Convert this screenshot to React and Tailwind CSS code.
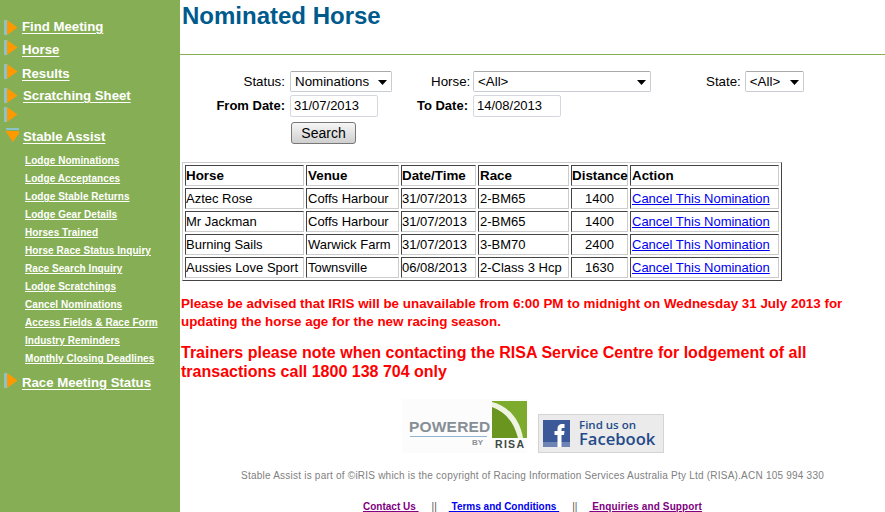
import React from "react";

const Arrow = ({ down }) =>
  down ? (
    <svg width="16" height="16" viewBox="0 0 16 16" className="shrink-0">
      <rect x="3" y="0" width="15" height="2" fill="#8cc3c9" />
      <polygon points="3,3 18,3 10.5,14" fill="#ff9900" transform="translate(-0.5 0)" />
    </svg>
  ) : (
    <svg width="14" height="16" viewBox="0 0 14 16" className="shrink-0">
      <rect x="0" y="0" width="3" height="15" fill="#8cc3c9" />
      <polygon points="3,0 13.5,7.5 3,15" fill="#ff9900" />
    </svg>
  );

const Main = ({ label, cls = "", gap = "ml-[4px]", drop = "-mt-[1px]" }) => (
  <div className={`flex items-start pl-[4px] ${cls}`}>
    <Arrow />
    {label && (
      <a className={`${gap} ${drop} text-[13.2px] leading-[16px] font-bold text-white underline underline-offset-2`}>{label}</a>
    )}
  </div>
);

const subs = [
  "Lodge Nominations",
  "Lodge Acceptances",
  "Lodge Stable Returns",
  "Lodge Gear Details",
  "Horses Trained",
  "Horse Race Status Inquiry",
  "Race Search Inquiry",
  "Lodge Scratchings",
  "Cancel Nominations",
  "Access Fields & Race Form",
  "Industry Reminders",
  "Monthly Closing Deadlines",
];

const rows = [
  ["Aztec Rose", "Coffs Harbour", "31/07/2013", "2-BM65", "1400"],
  ["Mr Jackman", "Coffs Harbour", "31/07/2013", "2-BM65", "1400"],
  ["Burning Sails", "Warwick Farm", "31/07/2013", "3-BM70", "2400"],
  ["Aussies Love Sport", "Townsville", "06/08/2013", "2-Class 3 Hcp", "1630"],
];

const base = "border border-t-[#444] border-l-[#444] border-r-[#ccc] border-b-[#ccc] h-[21px] leading-[16px] text-[#000] whitespace-nowrap";
const cell = `${base} text-[13px] font-normal`;
const head = `${base} text-[13.4px] font-bold text-left`;
const pads = ["pl-0", "pl-[1px]", "pl-0", "pl-[1px]", "pl-0", "pl-[1px]"];

const Sel = ({ w, children, pl = "pl-[4px]" }) => (
  <div className={`relative h-[21px] ${w} ${pl} flex items-center bg-white border border-[#c8ccd2] border-t-[#a9a9a9] rounded-[2px] text-[13.33px] text-black`}>
    <span>{children}</span>
    <svg width="9" height="5" viewBox="0 0 9 5" className="absolute right-[4px] top-[8px]">
      <polygon points="0,0 9,0 4.5,5" fill="#000" />
    </svg>
  </div>
);

const Inp = ({ children }) => (
  <div className="h-[22px] w-[88px] pl-[3px] flex items-center bg-white border border-[#d4d8de] rounded-[2px] text-[13px] text-black">
    {children}
  </div>
);

export default function App() {
  return (
    <div className="flex w-[885px] h-[512px] overflow-hidden bg-white font-['Liberation_Sans',Arial,sans-serif]">
      <aside className="w-[180px] h-full shrink-0 bg-[#86af55] pt-[20px]">
        <Main label="Find Meeting" />
        <Main label="Horse" cls="mt-[4px]" drop="mt-[2px]" />
        <Main label="Results" cls="mt-[6px]" drop="mt-[2px]" />
        <Main label="Scratching Sheet" cls="mt-[6px]" gap="ml-[5px]" drop="mt-0" />
        <Main cls="mt-[3px]" />
        <div className="flex items-start pl-[3px] mt-[5px]">
          <Arrow down />
          <a className="ml-[4px] mt-[1px] text-[13.2px] leading-[16px] font-bold text-white underline underline-offset-2">Stable Assist</a>
        </div>
        <ul className="mt-[7px] pl-[25px]">
          {subs.map((s) => (
            <li key={s} className="h-[18px] text-[10px] leading-[18px] font-bold text-white underline underline-offset-1 tracking-[0.06px] whitespace-nowrap">
              {s}
            </li>
          ))}
        </ul>
        <Main label="Race Meeting Status" cls="mt-[5px]" drop="mt-[2px]" />
      </aside>

      <main className="flex-1 min-w-0 pl-[1px]">
        <h1 className="ml-[1px] text-[24px] leading-[28px] font-bold text-[#005a8c] mt-[2px]">Nominated Horse</h1>
        <div className="h-px bg-[#86af55] mt-[24px] -ml-[1px]" />

        <div className="mt-[16px] flex items-center h-[21px] text-[13.33px] text-black">
          <span className="w-[104px] text-right mr-[5px]">Status:</span>
          <Sel w="w-[102px]">Nominations</Sel>
          <span className="ml-[39px] w-[38px] text-right mr-[4px]">Horse:</span>
          <Sel w="w-[178px]">&lt;All&gt;</Sel>
          <span className="ml-[55px] mr-[4px]">State:</span>
          <Sel w="w-[59px]">&lt;All&gt;</Sel>
        </div>
        <div className="mt-[3px] flex items-center h-[22px] text-[13px] text-black">
          <span className="w-[104px] text-right mr-[5px] font-bold">From Date:</span>
          <Inp>31/07/2013</Inp>
          <span className="w-[90px] text-right mr-[5px] font-bold">To Date:</span>
          <Inp>14/08/2013</Inp>
        </div>
        <button className="block mt-[5px] ml-[110px] w-[65px] h-[22px] rounded-[3px] border border-[#777] bg-gradient-to-b from-[#f6f6f6] to-[#cfcfcf] text-[14px] text-black">
          Search
        </button>

        <table className="mt-[18px] ml-[1px] w-[600px] table-fixed border-separate border-spacing-[2px] border border-t-[#ccc] border-l-[#ccc] border-r-[#444] border-b-[#444]">
          <colgroup>
            <col className="w-[119px]" />
            <col className="w-[93px]" />
            <col className="w-[75px]" />
            <col className="w-[91px]" />
            <col className="w-[57px]" />
            <col className="w-[149px]" />
          </colgroup>
          <thead>
            <tr>
              {["Horse", "Venue", "Date/Time", "Race", "Distance", "Action"].map((h, i) => (
                <th key={h} className={`${head} ${pads[i]}`}>{h}</th>
              ))}
            </tr>
          </thead>
          <tbody>
            {rows.map((r) => (
              <tr key={r[0]}>
                <td className={`${cell} text-left ${pads[0]}`}>{r[0]}</td>
                <td className={`${cell} text-left ${pads[1]}`}>{r[1]}</td>
                <td className={`${cell} text-left ${pads[2]}`}>{r[2]}</td>
                <td className={`${cell} text-left ${pads[3]}`}>{r[3]}</td>
                <td className={`${cell} text-center`}>{r[4]}</td>
                <td className={`${cell} text-left ${pads[5]}`}>
                  <a className="text-[#0000ee] underline">Cancel This Nomination</a>
                </td>
              </tr>
            ))}
          </tbody>
        </table>

        <p className="mt-[14px] w-[690px] text-[13.4px] leading-[18px] font-bold text-[#ff0000]">
          Please be advised that IRIS will be unavailable from 6:00 PM to midnight on Wednesday 31 July 2013 for updating the horse age for the new racing season.
        </p>
        <p className="mt-[12px] w-[690px] text-[16px] leading-[19px] font-bold text-[#ff0000]">
          Trainers please note when contacting the RISA Service Centre for lodgement of all transactions call 1800 138 704 only
        </p>

        <div className="mt-[18px] ml-[221px] flex items-end gap-[11px]">
          <div className="relative w-[125px] h-[54px] bg-[#fcfcfc]">
            <svg width="125" height="54" viewBox="0 0 125 54" className="absolute inset-0">
              <rect x="90" y="2" width="35" height="37" fill="#7cab2e" />
              <path d="M90 5 C106 8 116 20 120 39 L90 39 Z" fill="#6a961f" />
              <path d="M90 3 C106 7 118 20 121 39 L116 39 C112 24 104 13 90 8 Z" fill="#eef3e2" />
              <line x1="8" y1="37.5" x2="85" y2="37.5" stroke="#8fb5d0" strokeWidth="1" />
            </svg>
            <span className="absolute left-[7px] top-[19px] text-[15.5px] leading-[18px] font-bold text-[#868e96] tracking-[0.2px]">POWERED</span>
            <span className="absolute left-[70px] top-[39px] text-[8px] leading-[10px] font-bold text-[#8a9096]">BY</span>
            <span className="absolute left-[93px] top-[39px] text-[10.5px] leading-[12px] font-bold text-[#3d4a44] tracking-[1.3px]">RISA</span>
          </div>
          <div className="relative w-[126px] h-[39px] bg-[#ebebeb] border border-[#d4d4d4]">
            <svg width="27" height="27" viewBox="0 0 27 27" className="absolute left-[4px] top-[5px]">
              <rect width="27" height="27" fill="#3b5998" />
              <rect y="22" width="27" height="5" fill="#6d84b4" />
              <path d="M14.5 27 V15 H11.5 V11 H14.5 V8.5 C14.5 5.5 16.5 4 19 4 H21.5 V8 H19.8 C18.7 8 18.5 8.5 18.5 9.5 V11 H21.5 L21 15 H18.5 V27 Z" fill="#fff" />
            </svg>
            <span className="absolute left-[40px] top-[5px] text-[11.5px] leading-[10px] font-semibold text-[#254a8a] font-['Open_Sans',sans-serif] whitespace-nowrap">Find us on</span>
            <span className="absolute left-[40px] top-[15px] text-[16.6px] leading-[18px] font-semibold text-[#254a8a] font-['Open_Sans',sans-serif] whitespace-nowrap">Facebook</span>
          </div>
        </div>

        <p className="mt-[16px] ml-[60px] text-[10px] leading-[13px] text-[#808080] whitespace-nowrap tracking-[0.225px]">
          Stable Assist is part of ©iRIS which is the copyright of Racing Information Services Australia Pty Ltd (RISA).ACN 105 994 330
        </p>
        <div className="mt-[19px] ml-[182px] flex items-center text-[10px] leading-[12px] font-bold whitespace-nowrap">
          <a className="text-[#800080] underline whitespace-pre">Contact Us </a>
          <span className="ml-[13px] mr-[12px] font-normal text-[#555]">||</span>
          <a className="text-[#0000ee] underline whitespace-pre"> Terms and Conditions </a>
          <span className="ml-[13px] mr-[12px] font-normal text-[#555]">||</span>
          <a className="text-[#800080] underline whitespace-pre tracking-[0.12px]"> Enquiries and Support</a>
        </div>
      </main>
    </div>
  );
}
